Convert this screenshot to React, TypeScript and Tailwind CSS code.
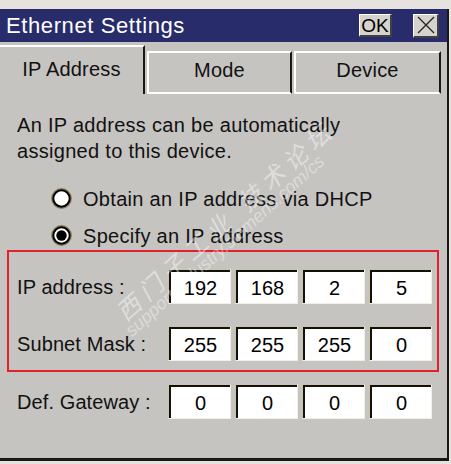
import React from 'react';

const FONT = "font-['Liberation_Sans',Arial,sans-serif]";

const Radio: React.FC<{ checked?: boolean }> = ({ checked = false }) => (
  <svg width="21" height="21" viewBox="0 0 21 21" className="shrink-0">
    <circle cx="10.5" cy="10.5" r="9.6" fill="#fff" stroke="#8a7a58" strokeWidth="1.6" />
    <circle cx="10.5" cy="10.5" r="8.2" fill="#fff" stroke="#000" strokeWidth="2" />
    {checked && <circle cx="10.5" cy="10.5" r="5.2" fill="#000" />}
  </svg>
);

const Field: React.FC<{ value: string }> = ({ value }) => (
  <div className="w-[63px] h-[35px] border border-[#cfc3a4] border-r-[#f3efe2] border-b-[#f3efe2]">
    <div className="h-full w-full bg-white border-t-2 border-l-2 border-[#111] flex items-center justify-center text-[20px] text-black leading-none">
      {value}
    </div>
  </div>
);

const AddressRow: React.FC<{ label: string; values: string[] }> = ({ label, values }) => (
  <div className="flex items-center h-[35px]">
    <span className="w-[151px] text-[20px] tracking-[0.1px] text-[#111]">{label}</span>
    <div className="flex gap-[4px]">
      {values.map((v, i) => (
        <Field key={i} value={v} />
      ))}
    </div>
  </div>
);

export default function App() {
  return (
    <div className={`relative w-[451px] h-[464px] overflow-hidden bg-[#e6e3de] pt-[9px] ${FONT}`}>
      <div className="w-[449px] h-[452px] bg-[#c6c4c1] border-r-2 border-b-[3px] border-[#1b1712] flex flex-col">
        {/* title bar */}
        <div className="h-[33px] bg-[#282c6b] flex items-center pl-[6px] pr-[8px]">
          <span className="text-white text-[22px] tracking-[0.6px] leading-none">Ethernet Settings</span>
          <button className="ml-auto w-[33px] h-[23px] bg-[#d6d3ce] border-t border-l border-white border-b-2 border-r-2 border-b-[#404040] border-r-[#404040] text-[19px] leading-none text-black flex items-center justify-center">
            OK
          </button>
          <button className="ml-[21px] w-[26px] h-[24px] bg-[#d6d3ce] border-t border-l border-white border-b-2 border-r-2 border-b-[#404040] border-r-[#404040] flex items-center justify-center">
            <svg width="18" height="18" viewBox="0 0 18 18">
              <path d="M1 1L17 17M17 1L1 17" stroke="#222" strokeWidth="1.3" />
            </svg>
          </button>
        </div>

        {/* tabs */}
        <div className="flex h-[52px] items-end">
          <div className="w-[145px] h-[49px] border-t-2 border-white border-r-2 border-r-[#1b1712] flex items-center justify-center pb-[4px] text-[20px] tracking-[0.2px] text-[#111]">
            IP Address
          </div>
          <div className="ml-[2px] w-[145px] h-[43px] border-t-2 border-l-2 border-b-2 border-white border-r-2 border-r-[#1b1712] flex items-center justify-center pb-[6px] text-[20px] tracking-[0.2px] text-[#111]">
            Mode
          </div>
          <div className="ml-[2px] w-[147px] h-[43px] border-t-2 border-l-2 border-b-2 border-white border-r-2 border-r-[#1b1712] flex items-center justify-center pb-[6px] text-[20px] tracking-[0.2px] text-[#111]">
            Device
          </div>
        </div>

        {/* content */}
        <div className="flex flex-col pl-[7px] pr-[8px]">
          <p className="mt-[18px] pl-[10px] text-[20px] leading-[26px] tracking-[0.3px] text-[#111]">
            An IP address can be automatically
            <br />
            assigned to this device.
          </p>

          <div className="mt-[16px] pl-[44px] flex flex-col">
            <label className="flex items-center gap-[11px] h-[37px] text-[20px] tracking-[0.3px] text-[#111]">
              <Radio />
              Obtain an IP address via DHCP
            </label>
            <label className="flex items-center gap-[11px] h-[37px] text-[20px] tracking-[0.3px] text-[#111]">
              <Radio checked />
              Specify an IP address
            </label>
          </div>

          <div className="mt-[-4px] w-[432px] h-[122px] border-2 border-[#e4202c] pl-[8px] pt-[17px] flex flex-col gap-[22px]">
            <AddressRow label="IP address :" values={['192', '168', '2', '5']} />
            <AddressRow label="Subnet Mask :" values={['255', '255', '255', '0']} />
          </div>

          <div className="mt-[12px] pl-[10px]">
            <AddressRow label="Def. Gateway :" values={['0', '0', '0', '0']} />
          </div>
        </div>
      </div>

      {/* watermark */}
      <div className="pointer-events-none absolute left-[119px] top-[303px] origin-left -rotate-[42deg] whitespace-nowrap text-[24px] leading-none tracking-[6px] italic text-white/45 font-['Noto_Sans_CJK_SC',sans-serif]">
        西门子工业<span className="ml-[14px]">技术论坛</span>
      </div>
      <div className="pointer-events-none absolute left-[128px] top-[324px] origin-left -rotate-[42deg] whitespace-nowrap text-[18px] leading-none italic text-white/40 font-['Liberation_Sans',sans-serif]">
        support.industry.siemens.com/cs
      </div>
    </div>
  );
}
